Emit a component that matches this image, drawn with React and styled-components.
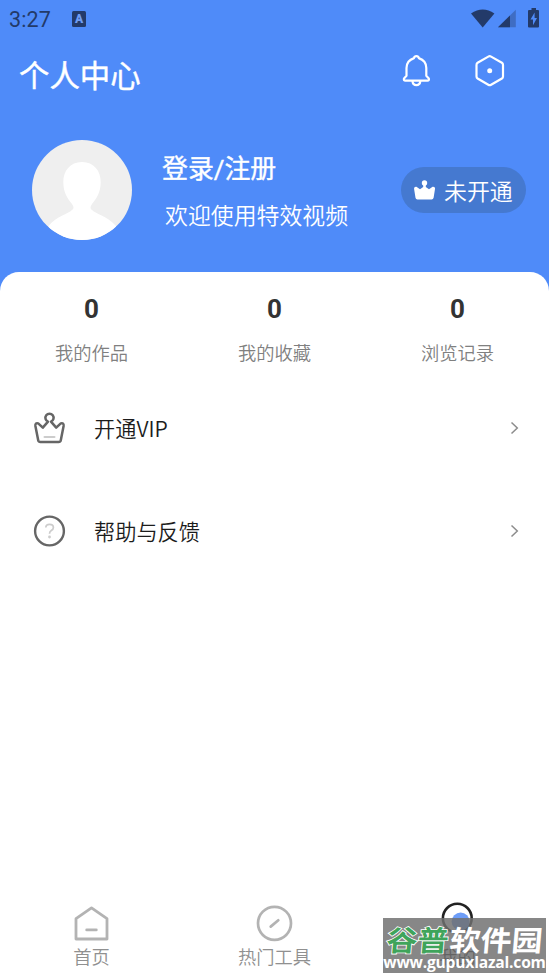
import React from 'react';
import styled, { createGlobalStyle } from 'styled-components';

const stats = [
  { label: '我的作品', value: 0 },
  { label: '我的收藏', value: 0 },
  { label: '浏览记录', value: 0 },
];

const CROWN =
  'M2.4 15L5.2 29.2Q5.6 31 7.4 31H25.6Q27.4 31 27.8 29.2L30.6 15Q31 11.6 27.8 12.4L23.2 16.6L18 10.6A4.1 4.1 0 1 0 15 10.6L9.8 16.6L5.2 12.4Q2 11.6 2.4 15Z';

const StatusIcons = () => (
  <svg width="70" height="22" viewBox="0 0 70 22">
    <path fill="#233a69" d="M0 5.6Q11.8-2.8 23.4 5.6L11.7 19.4Z" />
    <path fill="#3f6dc3" d="M27 19.3L44.8 1.8V19.3Z" />
    <path fill="#233a69" d="M27 19.3L39 7.5V19.3Z" />
    <path fill="#233a69" d="M60.5 0H65V2H67Q68 2 68 3V18.5Q68 19.5 67 19.5H58Q57 19.5 57 18.5V3Q57 2 58 2H60.5Z" />
    <path fill="#4f8bf9" d="M63.6 4.5L59.5 11.6H62V17.2L66 10H63.6Z" />
  </svg>
);

const BellIcon = () => (
  <svg width="30" height="34" viewBox="0 0 30 34" fill="none" stroke="#fff" strokeWidth="2.2" strokeLinejoin="round">
    <path d="M14.4 2.1Q12.4 2.1 12 4.1Q4.5 6.6 4.5 14V21.8L2 24.4Q1.4 26.7 3.4 26.7H25.4Q27.4 26.7 26.8 24.4L24.3 21.8V14Q24.3 6.6 16.8 4.1Q16.4 2.1 14.4 2.1Z" />
    <path d="M10.4 27Q11 31.2 14.4 31.2Q17.8 31.2 18.4 27" />
  </svg>
);

const HexagonIcon = () => (
  <svg width="30" height="34" viewBox="0 0 30 34">
    <path
      d="M13.3 2.6Q14.7 1.8 16.1 2.6L26.9 8.8Q28 9.5 28 10.9V22.5Q28 23.8 26.9 24.5L16.1 30.8Q14.7 31.6 13.3 30.8L2.6 24.5Q1.5 23.8 1.5 22.5V10.9Q1.5 9.5 2.6 8.8Z"
      fill="none"
      stroke="#fff"
      strokeWidth="2.2"
    />
    <circle cx="14.7" cy="16.8" r="2.5" fill="#fff" />
  </svg>
);

const AvatarIcon = () => (
  <svg width="100" height="100" viewBox="0 0 100 100">
    <path
      fill="#fff"
      d="M50 22C38 22 31.3 31 31.3 42C31.3 53 36 59 40 64Q43 68 40 70C36 74 25 76 16.5 86V100H84V86C75 76 64 74 60 70Q57 68 60 64C64 59 68.7 53 68.7 42C68.7 31 62 22 50 22Z"
    />
  </svg>
);

const BadgeCrown = () => (
  <svg width="22" height="20" viewBox="0 0 22 20" fill="#fff">
    <circle cx="10.5" cy="3" r="2.7" />
    <path d="M9.2 4H11.8V7L15 9.3L18.6 6.7Q21.4 6.3 21 9L19.6 17.8Q19.3 19.5 17.6 19.5H3.4Q1.8 19.5 1.5 17.8L.1 9Q-.2 6.3 2.4 6.7L6 9.3L9.2 7Z" />
  </svg>
);

const VipIcon = () => (
  <svg width="34" height="34" viewBox="0 0 34 34" fill="none" strokeLinecap="round" strokeLinejoin="round">
    <path d={CROWN} stroke="#666" strokeWidth="2.5" />
    <path d="M11.5 26H21.5" stroke="#ccc" strokeWidth="2" />
  </svg>
);

const HelpIcon = () => (
  <svg width="34" height="34" viewBox="0 0 34 34" fill="none">
    <circle cx="16.5" cy="17" r="14.4" stroke="#666" strokeWidth="2.4" />
    <path d="M12.8 13.6Q12.8 10.3 16.6 10.3Q20.4 10.3 20.4 13.4Q20.4 15.2 18.3 16.5Q16.5 17.7 16.5 19.8" stroke="#ccc" strokeWidth="1.7" />
    <circle cx="16.5" cy="23" r="1.4" fill="#ccc" />
  </svg>
);

const HomeIcon = () => (
  <svg width="38" height="38" viewBox="0 0 38 38" fill="none" stroke="#b3b3b3" strokeWidth="2.8" strokeLinejoin="round">
    <path d="M3 13.7L18.5 2.9L34 13.7V34H3Z" />
    <path d="M13.7 24.9H23.3" strokeLinecap="round" />
  </svg>
);

const ToolsIcon = () => (
  <svg width="38" height="38" viewBox="0 0 38 38" fill="none" stroke="#b3b3b3" strokeWidth="2.7">
    <circle cx="18.5" cy="18.3" r="16.5" />
    <path d="M14.7 21.6L22.3 15.3" strokeLinecap="round" />
  </svg>
);

const ProfileIcon = () => (
  <svg width="38" height="38" viewBox="0 0 38 38" fill="none" overflow="visible">
    <circle cx="18.3" cy="13.2" r="14.4" stroke="#222" strokeWidth="2.6" />
    <circle cx="21.6" cy="16.5" r="9" fill="#6d9df8" />
  </svg>
);

const menu = [
  { label: '开通VIP', Icon: VipIcon },
  { label: '帮助与反馈', Icon: HelpIcon },
];

const tabs = [
  { label: '首页', Icon: HomeIcon },
  { label: '热门工具', Icon: ToolsIcon },
  { label: '我的', Icon: ProfileIcon, active: true },
];

const App = () => (
  <>
    <GlobalStyle />
    <Screen>
      <StatusBar>
        <Clock>3:27</Clock>
        <KeyboardBadge>A</KeyboardBadge>
        <StatusIcons />
      </StatusBar>

      <Header>
        <Title>个人中心</Title>
        <BellIcon />
        <HexagonIcon />
      </Header>

      <Profile>
        <Avatar>
          <AvatarIcon />
        </Avatar>
        <ProfileText>
          <Login>登录/注册</Login>
          <Welcome>欢迎使用特效视频</Welcome>
        </ProfileText>
        <VipBadge>
          <BadgeCrown />
          未开通
        </VipBadge>
      </Profile>

      <Panel>
        <Stats>
          {stats.map(({ label, value }) => (
            <Stat key={label}>
              <StatValue>{value}</StatValue>
              <StatLabel>{label}</StatLabel>
            </Stat>
          ))}
        </Stats>

        <Menu>
          {menu.map(({ label, Icon }) => (
            <MenuItem key={label}>
              <Icon />
              <MenuLabel>{label}</MenuLabel>
              <svg width="10" height="14" viewBox="0 0 10 14" fill="none">
                <path d="M1.5 1.5L7.3 7L1.5 12.5" stroke="#8c8c8c" strokeWidth="1.5" />
              </svg>
            </MenuItem>
          ))}
        </Menu>

        <TabBar>
          {tabs.map(({ label, Icon, active }) => (
            <Tab key={label} $active={active}>
              <Icon />
              <span>{label}</span>
            </Tab>
          ))}
        </TabBar>
      </Panel>

      <Watermark>
        <WatermarkName>
          <Green>谷普</Green>
          <span>软件园</span>
        </WatermarkName>
        <WatermarkUrl>www.gupuxlazal.com</WatermarkUrl>
      </Watermark>
    </Screen>
  </>
);

const GlobalStyle = createGlobalStyle`
  * {
    box-sizing: border-box;
  }

  body {
    margin: 0;
    font-family: Roboto, 'Noto Sans CJK SC', sans-serif;
    font-weight: 350;
  }

  svg {
    display: block;
    flex-shrink: 0;
  }
`;

const Screen = styled.div`
  position: relative;
  display: flex;
  flex-direction: column;
  width: 549px;
  height: 976px;
  overflow: hidden;
  background: #4f8bf9;
  color: #fff;
`;

const StatusBar = styled.div`
  display: flex;
  align-items: center;
  height: 38px;
  padding: 0 8px 0 9px;

  & > svg {
    margin-left: auto;
  }
`;

const Clock = styled.span`
  width: 63px;
  padding-top: 1px;
  font-size: 21.5px;
  font-weight: 400;
  line-height: 26px;
  letter-spacing: 0.1px;
  color: #233a69;
`;

const KeyboardBadge = styled.span`
  width: 14px;
  height: 16px;
  margin-top: -1px;
  border-radius: 1.5px;
  background: #233a69;
  color: #6f9df3;
  font-size: 12px;
  font-weight: 900;
  line-height: 16px;
  text-align: center;
`;

const Header = styled.header`
  display: flex;
  align-items: center;
  height: 76px;
  padding: 0 44px 10px 19px;
  gap: 43px;
`;

const Title = styled.h1`
  flex: 1;
  margin: 0;
  padding-top: 11px;
  font-size: 30.4px;
  font-weight: 400;
  line-height: 40px;
  -webkit-text-stroke: 0.4px #fff;
`;

const Profile = styled.section`
  display: flex;
  height: 158px;
  padding: 26px 23px 0 32px;
`;

const Avatar = styled.div`
  width: 100px;
  height: 100px;
  border-radius: 50%;
  background: #efefef;
  overflow: hidden;
`;

const ProfileText = styled.div`
  flex: 1;
  padding: 11px 0 0 30px;
  white-space: nowrap;
`;

const Login = styled.div`
  font-size: 25.9px;
  font-weight: 400;
  line-height: 36px;
  -webkit-text-stroke: 0.4px #fff;
`;

const Welcome = styled.div`
  margin: 14px 0 0 3px;
  font-size: 22.9px;
  line-height: 32px;
`;

const VipBadge = styled.div`
  display: flex;
  align-items: center;
  gap: 8px;
  width: 125px;
  height: 46px;
  margin-top: 27px;
  padding-left: 13px;
  border-radius: 23px;
  background: #4579d0;
  font-size: 22.9px;
  white-space: nowrap;
`;

const Panel = styled.main`
  display: flex;
  flex: 1;
  flex-direction: column;
  border-radius: 19px 19px 0 0;
  background: #fff;
`;

const Stats = styled.div`
  display: grid;
  grid-template-columns: repeat(3, 1fr);
  height: 104px;
  padding-top: 21px;
`;

const Stat = styled.div`
  text-align: center;
`;

const StatValue = styled.div`
  font-size: 26px;
  font-weight: 700;
  line-height: 32px;
  color: #333;
`;

const StatLabel = styled.div`
  margin-top: 16px;
  font-size: 18.3px;
  line-height: 26px;
  color: #808080;
`;

const Menu = styled.div`
  flex: 1;
`;

const MenuItem = styled.div`
  display: flex;
  align-items: center;
  height: 103px;
  padding: 0 29px 0 33px;
`;

const MenuLabel = styled.span`
  flex: 1;
  margin-left: 27px;
  padding-top: 1px;
  font-family: 'Noto Sans CJK SC', sans-serif;
  font-size: 21.2px;
  line-height: 30px;
  color: #1c1c1c;
`;

const TabBar = styled.nav`
  display: grid;
  grid-template-columns: repeat(3, 1fr);
  height: 71px;
`;

const Tab = styled.div`
  display: flex;
  flex-direction: column;
  align-items: center;
  gap: 2px;
  font-size: 18.3px;
  line-height: 26px;
  color: ${({ $active }) => ($active ? '#222' : '#909090')};
`;

const Watermark = styled.div`
  position: absolute;
  right: 3px;
  bottom: 3px;
  width: 163px;
  height: 55px;
  background: rgb(112 112 112 / 84%);
`;

const WatermarkName = styled.div`
  display: flex;
  justify-content: space-between;
  height: 35px;
  padding: 3px 3px 0 4px;
  font-family: 'Noto Sans CJK SC', sans-serif;
  font-size: 31px;
  font-weight: 700;
  line-height: 35px;
  white-space: nowrap;
  transform: skewX(-5deg) scaleY(0.92);
`;

const Green = styled.span`
  color: #3fa45b;
  -webkit-text-stroke: 1.8px #fff;
  paint-order: stroke;
`;

const WatermarkUrl = styled.div`
  display: flex;
  justify-content: center;
  height: 20px;
  font-family: 'Open Sans', sans-serif;
  font-size: 15.6px;
  font-weight: 700;
  letter-spacing: -0.2px;
  line-height: 19px;
  white-space: nowrap;
`;

export default App;
